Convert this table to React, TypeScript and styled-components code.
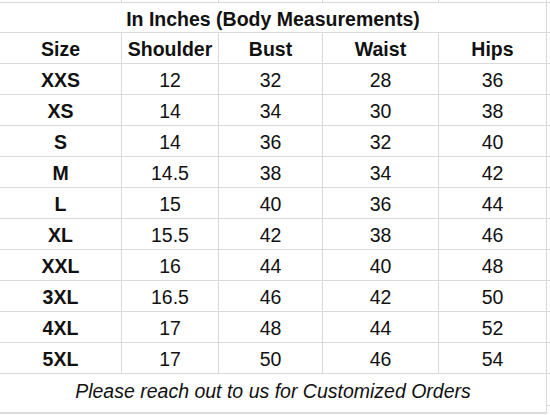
import React from "react";
import styled, { createGlobalStyle } from "styled-components";

const GlobalStyle = createGlobalStyle`
	html, body {
		margin: 0;
		padding: 0;
		background: #ffffff;
	}
	body {
		font-family: "Liberation Sans", Arial, sans-serif;
		color: #111111;
	}
`;

const LINE = "#dadada";

const Sheet = styled.div`
	width: 550px;
	height: 415px;
	overflow: hidden;
	display: grid;
	grid-template-columns: 122px 97px 104px 116px 108px 1fr;
	grid-template-rows: 3px 30px repeat(11, 31px) 40px;
	font-size: 19.5px;
`;

const Cell = styled.div<{ $bold?: boolean; $span?: number; $edge?: boolean }>`
	grid-column: span ${(p) => p.$span || 1};
	display: flex;
	align-items: flex-end;
	justify-content: center;
	padding-bottom: 3px;
	line-height: 22px;
	white-space: nowrap;
	font-weight: ${(p) => (p.$bold ? 700 : 400)};
	border-bottom: 1px solid ${LINE};
	border-right: ${(p) => (p.$edge ? "none" : `1px solid ${LINE}`)};
	box-sizing: border-box;
`;

const StubCell = styled.div<{ $edge?: boolean }>`
	border-bottom: 1px solid ${LINE};
	border-right: ${(p) => (p.$edge ? "none" : `1px solid ${LINE}`)};
`;

const TitleCell = styled(Cell)`
	padding-bottom: 2px;
`;

const NoteCell = styled(Cell)`
	font-style: italic;
	align-items: flex-start;
	padding-top: 6px;
	padding-bottom: 0;
	border-bottom: 2px solid ${LINE};
`;

const NoteEdge = styled.div`
	border-bottom: 1px solid ${LINE};
	height: 31px;
`;

const headers = ["Size", "Shoulder", "Bust", "Waist", "Hips"];

const rows: [string, string, number, number, number][] = [
	["XXS", "12", 32, 28, 36],
	["XS", "14", 34, 30, 38],
	["S", "14", 36, 32, 40],
	["M", "14.5", 38, 34, 42],
	["L", "15", 40, 36, 44],
	["XL", "15.5", 42, 38, 46],
	["XXL", "16", 44, 40, 48],
	["3XL", "16.5", 46, 42, 50],
	["4XL", "17", 48, 44, 52],
	["5XL", "17", 50, 46, 54],
];

function App() {
	return (
		<>
			<GlobalStyle />
			<Sheet>
				{/* partial row cut off above */}
				{[0, 1, 2, 3, 4].map((i) => (
					<StubCell key={i} />
				))}
				<StubCell $edge />

				<TitleCell $bold $span={5}>
					In Inches (Body Measurements)
				</TitleCell>
				<StubCell $edge />

				{headers.map((h) => (
					<Cell key={h} $bold>
						{h}
					</Cell>
				))}
				<StubCell $edge />

				{rows.map((r) => (
					<React.Fragment key={r[0]}>
						<Cell $bold>{r[0]}</Cell>
						<Cell>{r[1]}</Cell>
						<Cell>{r[2]}</Cell>
						<Cell>{r[3]}</Cell>
						<Cell>{r[4]}</Cell>
						<StubCell $edge />
					</React.Fragment>
				))}

				<NoteCell $span={5}>Please reach out to us for Customized Orders</NoteCell>
				<NoteEdge />
			</Sheet>
		</>
	);
}

export default App;
